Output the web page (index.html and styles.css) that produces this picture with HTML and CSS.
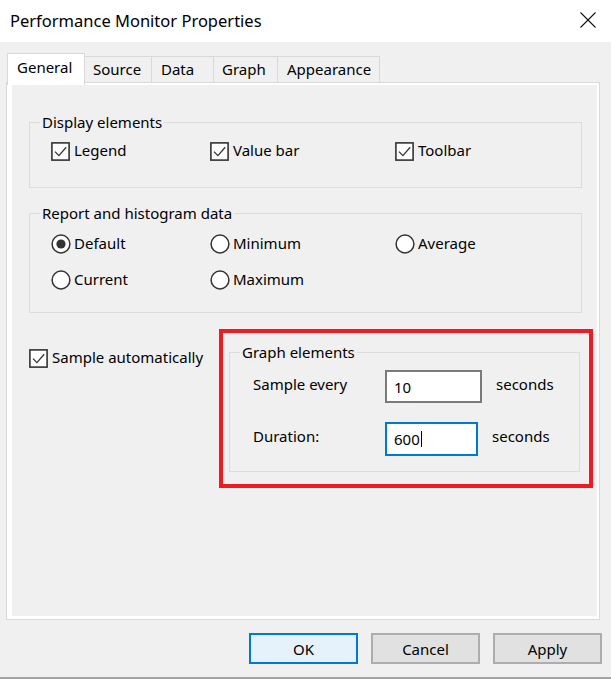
FILE: index.html
```html
<!DOCTYPE html>
<html>
<head>
<meta charset="utf-8">
<link rel="stylesheet" href="styles.css">
</head>
<body>
<div class="window">
  <header class="titlebar">
    <span class="title">Performance Monitor Properties</span>
    <svg class="close" width="16" height="16" viewBox="0 0 16 16"><path d="M0.5 0.5 L15.5 15.5 M15.5 0.5 L0.5 15.5" stroke="#111" stroke-width="1.1" fill="none"/></svg>
  </header>

  <nav class="tabs">
    <div class="tab active t-general">General</div>
    <div class="tab t-source">Source</div>
    <div class="tab t-data">Data</div>
    <div class="tab t-graph">Graph</div>
    <div class="tab t-appearance">Appearance</div>
  </nav>

  <div class="panel">
    <div class="page">
      <fieldset class="group g-display">
        <legend>Display elements</legend>
        <div class="opts">
          <label class="opt"><svg class="box" width="19" height="19" viewBox="0 0 19 19"><rect x="0.9" y="0.9" width="17.2" height="17.2" fill="#fff" stroke="#333" stroke-width="1.6"/><path d="M4 9.6 L7.9 13.6 L15.2 5.2" fill="none" stroke="#333" stroke-width="1.3"/></svg><span>Legend</span></label>
          <label class="opt"><svg class="box" width="19" height="19" viewBox="0 0 19 19"><rect x="0.9" y="0.9" width="17.2" height="17.2" fill="#fff" stroke="#333" stroke-width="1.6"/><path d="M4 9.6 L7.9 13.6 L15.2 5.2" fill="none" stroke="#333" stroke-width="1.3"/></svg><span>Value bar</span></label>
          <label class="opt"><svg class="box" width="19" height="19" viewBox="0 0 19 19"><rect x="0.9" y="0.9" width="17.2" height="17.2" fill="#fff" stroke="#333" stroke-width="1.6"/><path d="M4 9.6 L7.9 13.6 L15.2 5.2" fill="none" stroke="#333" stroke-width="1.3"/></svg><span>Toolbar</span></label>
        </div>
      </fieldset>

      <fieldset class="group g-report">
        <legend>Report and histogram data</legend>
        <div class="opts radios">
          <label class="opt"><svg class="radio" width="20" height="20" viewBox="0 0 20 20"><circle cx="10" cy="10" r="8.9" fill="#fff" stroke="#333" stroke-width="1.5"/><circle cx="10" cy="10" r="4.6" fill="#333"/></svg><span>Default</span></label>
          <label class="opt"><svg class="radio" width="20" height="20" viewBox="0 0 20 20"><circle cx="10" cy="10" r="8.9" fill="#fff" stroke="#333" stroke-width="1.5"/></svg><span>Minimum</span></label>
          <label class="opt"><svg class="radio" width="20" height="20" viewBox="0 0 20 20"><circle cx="10" cy="10" r="8.9" fill="#fff" stroke="#333" stroke-width="1.5"/></svg><span>Average</span></label>
          <label class="opt"><svg class="radio" width="20" height="20" viewBox="0 0 20 20"><circle cx="10" cy="10" r="8.9" fill="#fff" stroke="#333" stroke-width="1.5"/></svg><span>Current</span></label>
          <label class="opt"><svg class="radio" width="20" height="20" viewBox="0 0 20 20"><circle cx="10" cy="10" r="8.9" fill="#fff" stroke="#333" stroke-width="1.5"/></svg><span>Maximum</span></label>
        </div>
      </fieldset>

      <div class="bottom">
        <label class="opt auto"><svg class="box" width="19" height="19" viewBox="0 0 19 19"><rect x="0.9" y="0.9" width="17.2" height="17.2" fill="#fff" stroke="#333" stroke-width="1.6"/><path d="M4 9.6 L7.9 13.6 L15.2 5.2" fill="none" stroke="#333" stroke-width="1.3"/></svg><span>Sample automatically</span></label>
        <div class="highlight">
          <fieldset class="group g-graph">
            <legend>Graph elements</legend>
            <div class="fields">
              <div class="field">
                <span class="flabel">Sample every</span>
                <div class="input in-sample">10</div>
                <span class="unit">seconds</span>
              </div>
              <div class="field">
                <span class="flabel">Duration:</span>
                <div class="input in-duration focus">600<span class="caret"></span></div>
                <span class="unit">seconds</span>
              </div>
            </div>
          </fieldset>
        </div>
      </div>
    </div>
  </div>

  <footer class="buttons">
    <button class="btn default">OK</button>
    <button class="btn">Cancel</button>
    <button class="btn">Apply</button>
  </footer>
</div>
</body>
</html>
```

FILE: styles.css
```css
html, body {
  margin: 0;
  padding: 0;
}
body {
  background: #f0f0f0;
  font-family: "Noto Sans", "Liberation Sans", sans-serif;
  font-size: 15px;
  color: #000;
}
.window {
  width: 611px;
  height: 679px;
  box-sizing: border-box;
  border-bottom: 2px solid #a3a3a3;
  overflow: hidden;
}
.titlebar {
  height: 42px;
  background: #fff;
  display: flex;
  align-items: center;
}
.title {
  padding-left: 10px;
  font-size: 16.5px;
  margin-top: -2px;
}
.close {
  margin-left: auto;
  margin-right: 15px;
  margin-top: -3px;
}
.tabs {
  margin-top: 11px;
  padding-left: 7px;
  height: 29px;
  display: flex;
  align-items: flex-end;
}
.tab {
  box-sizing: border-box;
  height: 26px;
  border: 1px solid #d9d9d9;
  border-bottom: none;
  padding-left: 8px;
  padding-top: 1px;
  line-height: 22px;
  background: #f0f0f0;
}
.tab + .tab { margin-left: -1px; }
.tab.active {
  height: 32px;
  margin-bottom: -3px;
  position: relative;
  z-index: 1;
  background: #fff;
  padding-left: 9px;
  padding-top: 2px;
}
.t-general { width: 78px; }
.t-source { width: 68px; }
.t-data { width: 63px; padding-left: 9px; }
.t-graph { width: 65px; }
.t-appearance { width: 103px; padding-left: 9px; }

.panel {
  margin-left: 6px;
  width: 594px;
  height: 538px;
  box-sizing: border-box;
  border: 1px solid #d9d9d9;
}
.page {
  height: 100%;
  box-sizing: border-box;
  border-style: solid;
  border-color: #fff;
  border-width: 2px 2px 3px 5px;
  padding: 27px 15px 0 17px;
}
.group {
  margin: 0;
  padding: 0;
  border: 1px solid #dcdcdc;
  min-width: 0;
}
.group legend {
  margin-left: 10px;
  padding: 0 2px;
  line-height: 20px;
}
.opts {
  display: grid;
  grid-template-columns: 159px 185px auto;
  grid-auto-rows: 20px;
  padding: 9px 0 26px 21px;
}
.opt {
  display: flex;
  align-items: center;
  gap: 4px;
  height: 20px;
  white-space: nowrap;
}
.opt span { margin-top: -2px; }
.opt svg { flex: none; display: block; }
.g-report { margin-top: 15px; }
.radios {
  padding: 11px 0 22px 21px;
  row-gap: 16px;
}
.radios .opt { gap: 3px; }

.bottom {
  margin-top: 16px;
  display: grid;
  grid-template-columns: 190px 374px;
  align-items: start;
}
.auto { margin-top: 19px; }
.highlight {
  box-sizing: border-box;
  border: 4px solid #ed1c24;
  padding: 9px 9px 12px 6px;
  height: 159px;
}
.fields {
  padding: 8px 0 15px 23px;
  display: flex;
  flex-direction: column;
  gap: 19px;
}
.field {
  display: flex;
  align-items: center;
}
.flabel,
.unit {
  padding-bottom: 6px;
}
.flabel { width: 132px; }
.input {
  box-sizing: border-box;
  background: #fff;
  border: 2px solid #7a7a7a;
  padding-left: 7px;
  display: flex;
  align-items: center;
}
.in-sample { width: 97px; height: 33px; }
.in-duration { width: 93px; height: 34px; }
.input.focus { border-color: #0078d7; }
.caret {
  display: inline-block;
  width: 1px;
  height: 16px;
  background: #000;
  margin-left: 1px;
}
.unit { margin-left: 14px; }

.buttons {
  display: flex;
  justify-content: flex-end;
  gap: 13px;
  margin-top: 13px;
  padding-right: 9px;
}
.btn {
  width: 109px;
  height: 31px;
  box-sizing: border-box;
  border: 2px solid #adadad;
  background: #e1e1e1;
  font: inherit;
  color: #000;
  padding: 0;
}
.btn.default {
  border-color: #0078d7;
  background: #e5f1fb;
}
```
